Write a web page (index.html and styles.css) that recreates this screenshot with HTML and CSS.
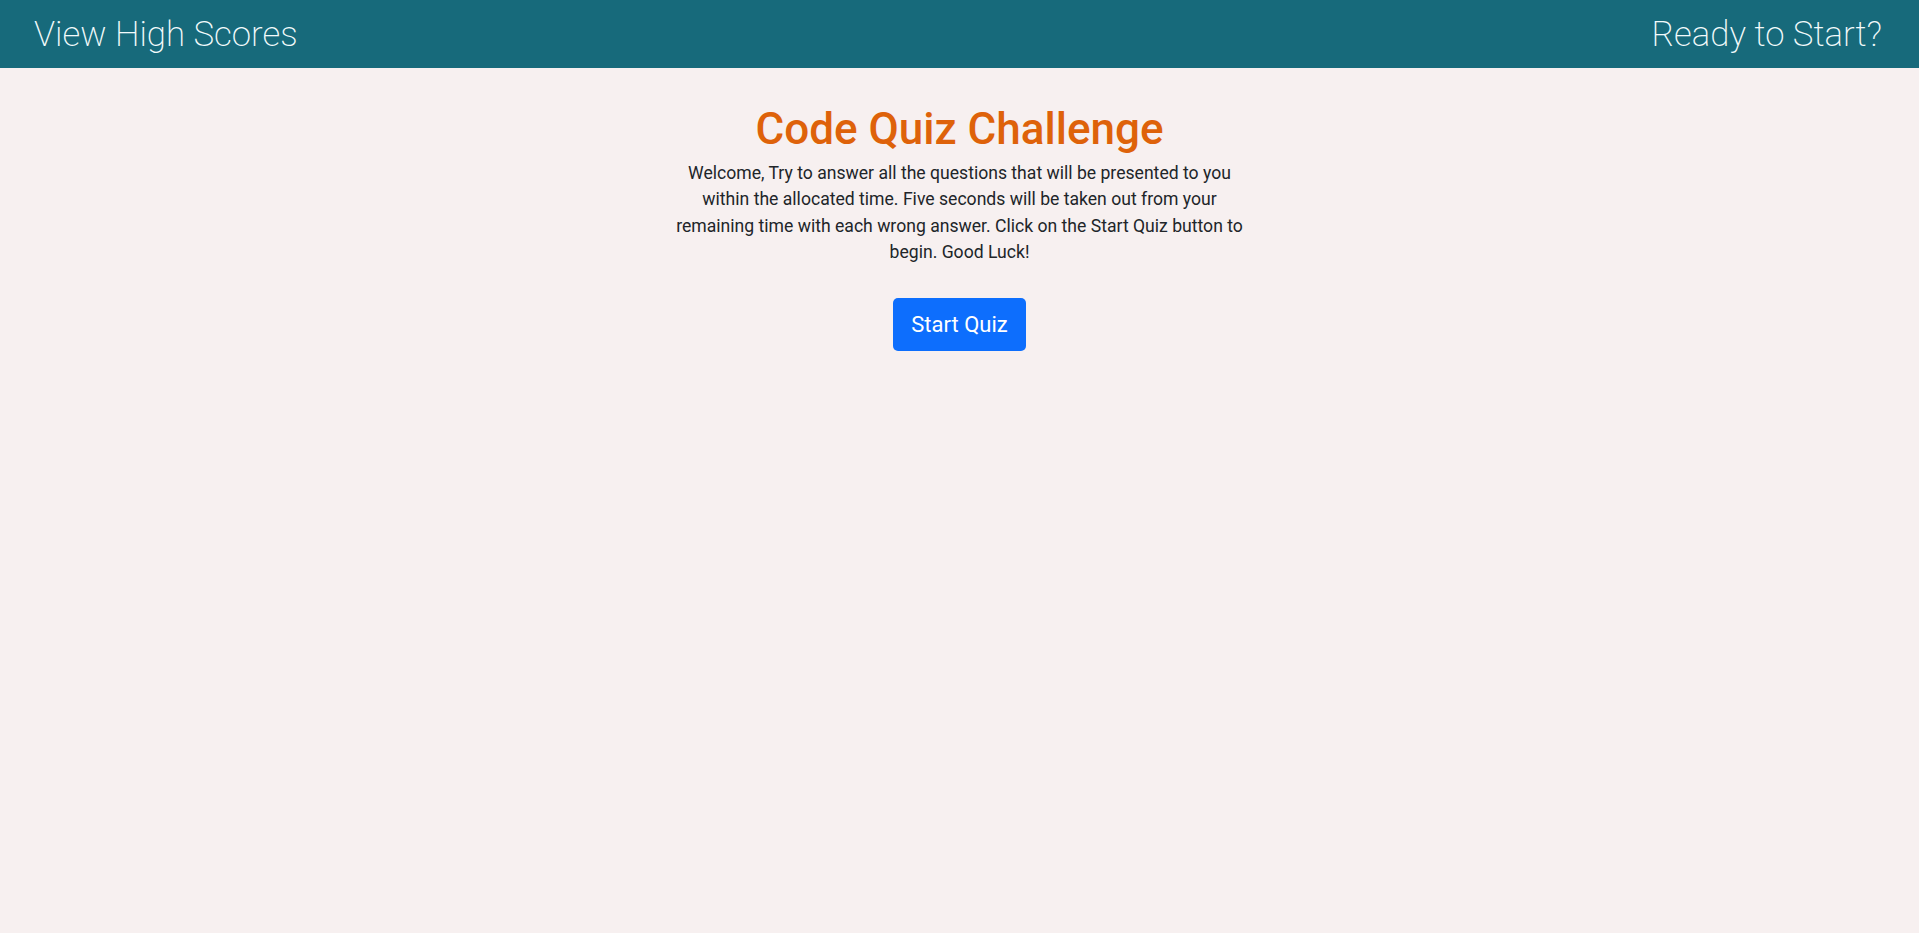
FILE: index.html
```html
<!DOCTYPE html>
<html lang="en">
<head>
<meta charset="utf-8">
<title>Code Quiz</title>
<link rel="stylesheet" href="styles.css">
</head>
<body>
<header class="topbar">
  <a class="topbar-link" href="#">View High Scores</a>
  <div class="topbar-timer">Ready to Start?</div>
</header>
<main class="intro">
  <h1 class="intro-title">Code Quiz Challenge</h1>
  <p class="intro-text">Welcome, Try to answer all the questions that will be presented to you within the allocated time. Five seconds will be taken out from your remaining time with each wrong answer. Click on the Start Quiz button to begin. Good Luck!</p>
  <button class="start-btn" type="button">Start Quiz</button>
</main>
</body>
</html>
```
FILE: styles.css
```css
* { box-sizing: border-box; }
html, body { margin: 0; padding: 0; }
body {
  background: #f7f0f0;
  font-family: Roboto, "Liberation Sans", sans-serif;
  color: #212529;
  min-height: 933px;
}
.topbar {
  height: 68px;
  background: #176a7b;
  display: flex;
  align-items: center;
  justify-content: space-between;
  padding: 0 37px 0 34px;
}
.topbar-link, .topbar-timer {
  color: #f3fbfc;
  font-size: 34.8px;
  font-weight: 200;
  text-decoration: none;
  line-height: 1;
}
.intro {
  display: flex;
  flex-direction: column;
  align-items: center;
  padding-top: 35px;
}
.intro-title {
  margin: 0 0 4px;
  font-size: 44px;
  line-height: 1.2;
  font-weight: 500;
  color: #de620a;
}
.intro-text {
  width: 574px;
  margin: 0 0 33px;
  text-align: center;
  font-size: 17.6px;
  line-height: 26.4px;
}
.start-btn {
  background: #0d6efd;
  color: #fff;
  border: none;
  border-radius: 5px;
  font-family: inherit;
  font-size: 22px;
  line-height: 1.5;
  padding: 10px 18px;
  cursor: pointer;
}
```
